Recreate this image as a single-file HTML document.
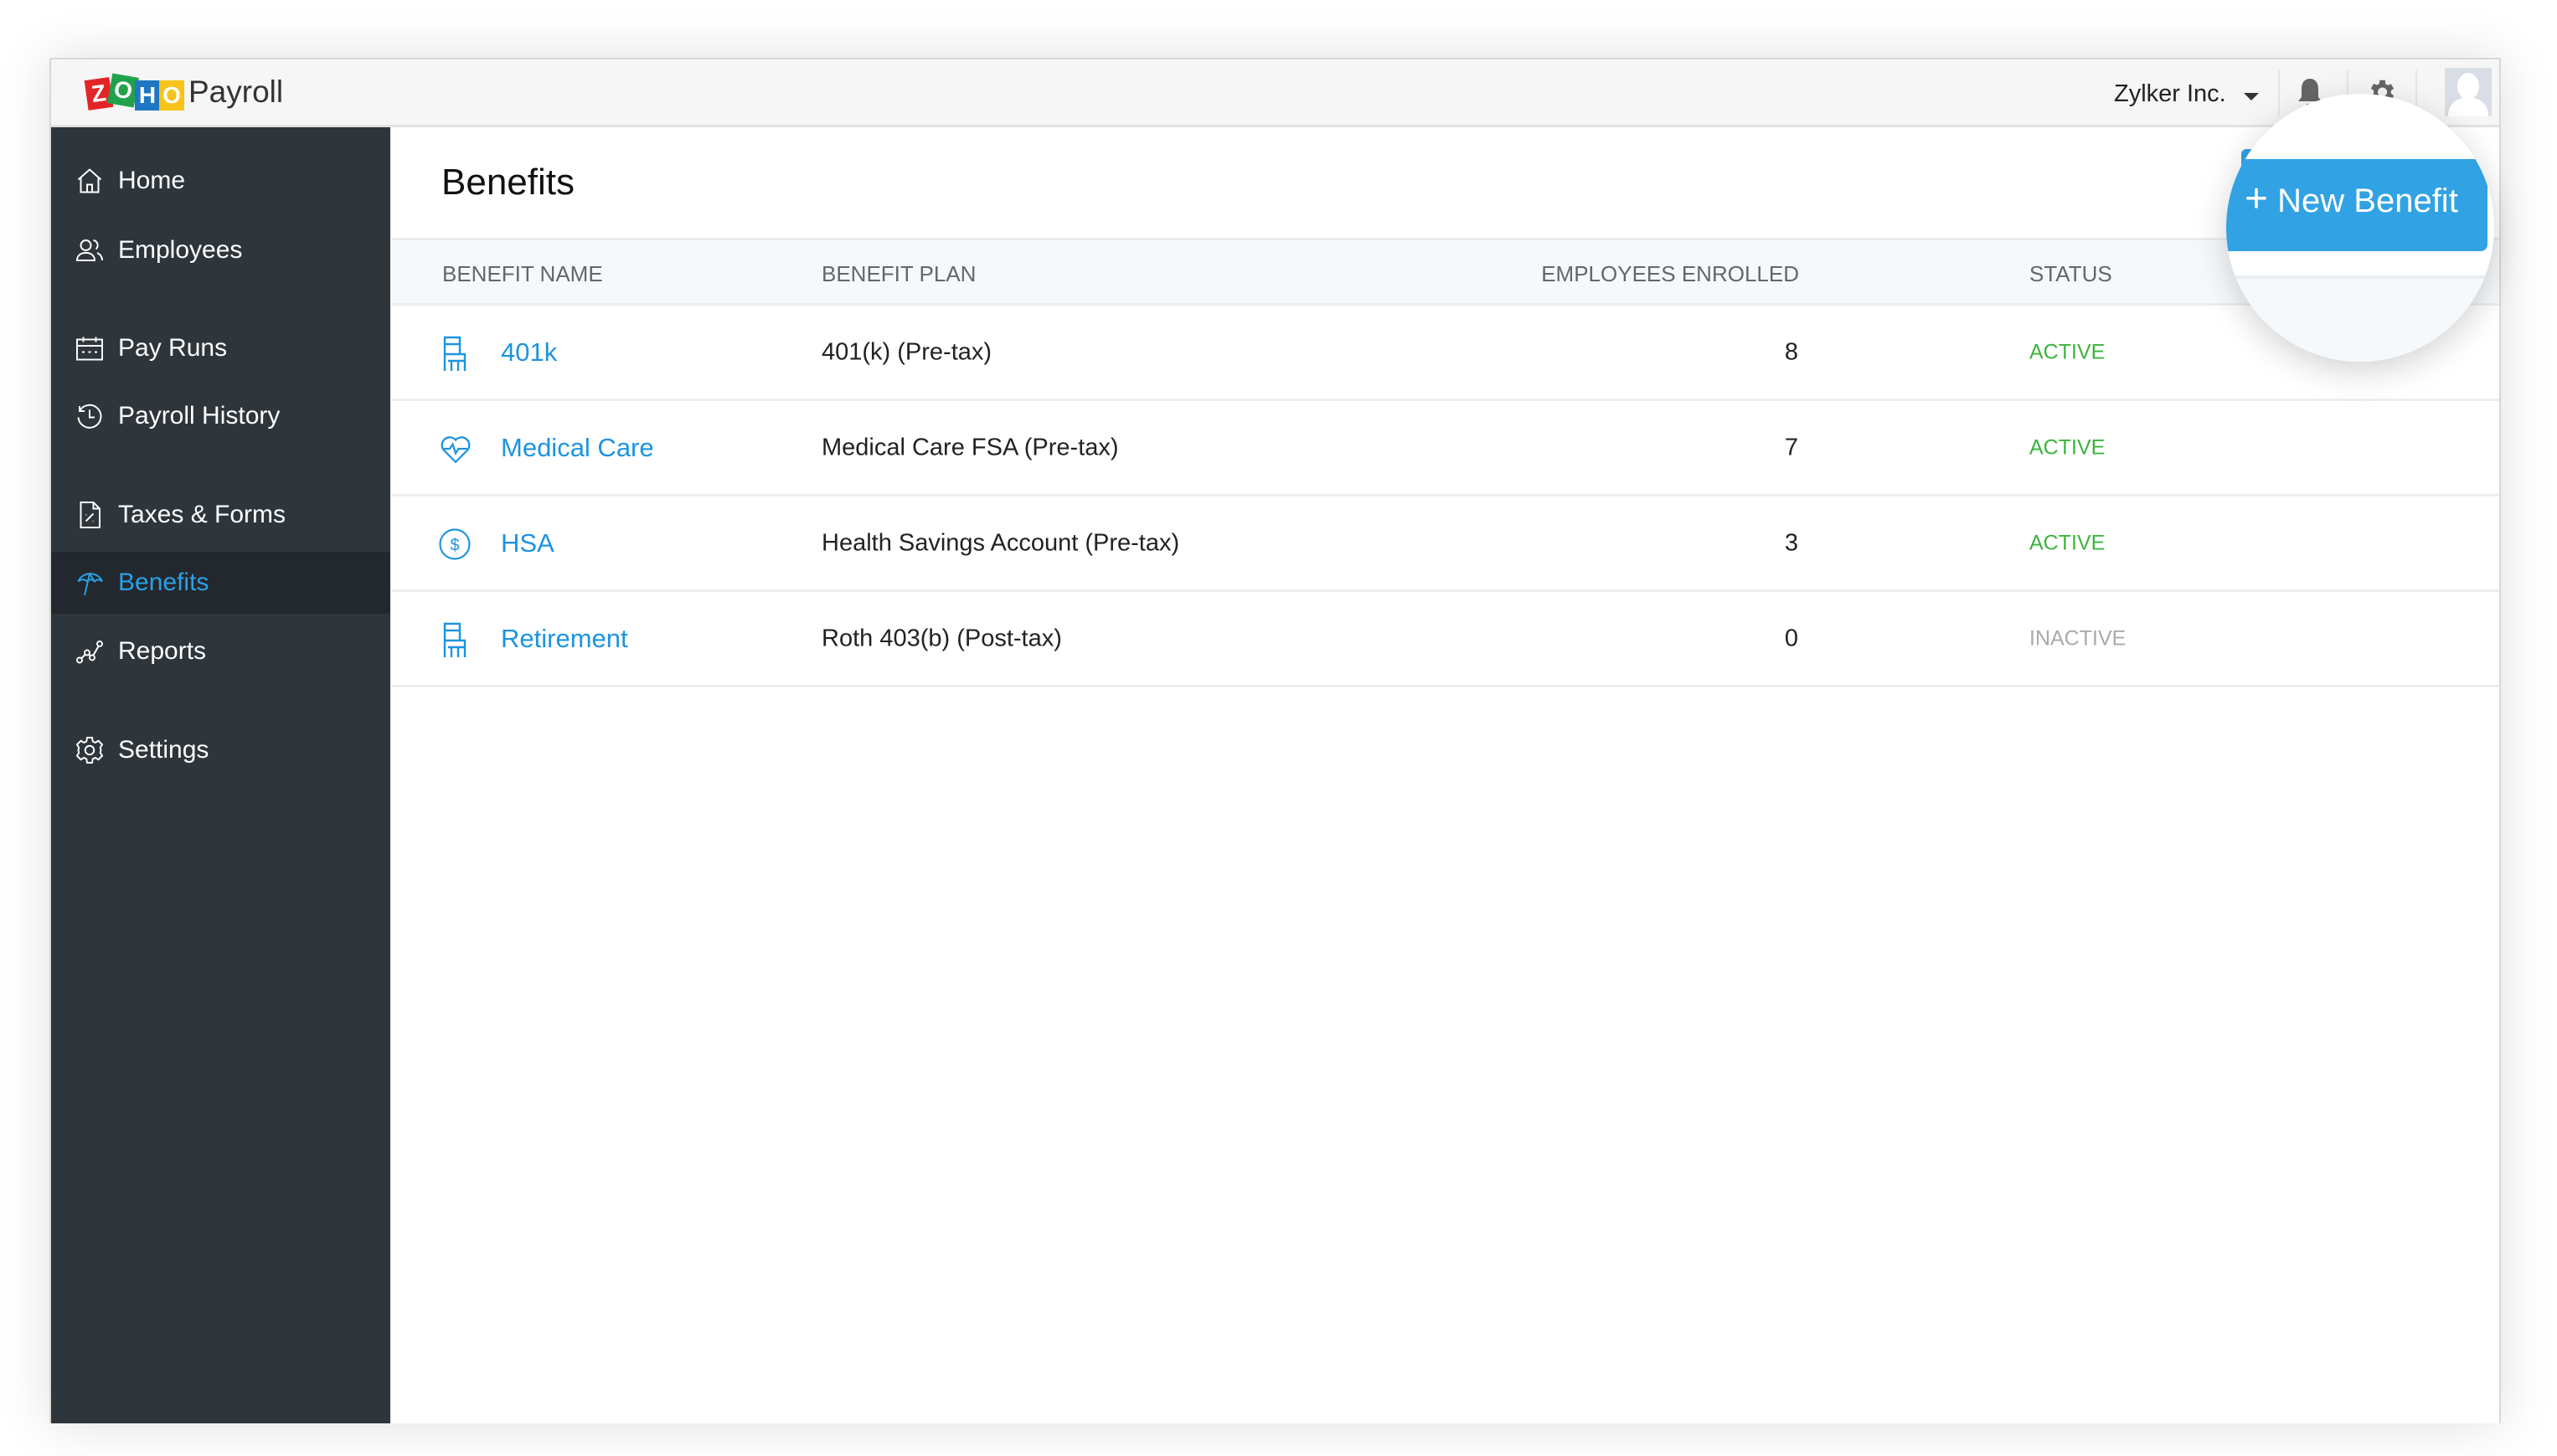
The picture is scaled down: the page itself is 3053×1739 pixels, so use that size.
<!DOCTYPE html>
<html><head><meta charset="utf-8"><style>
*{margin:0;padding:0;box-sizing:border-box}
body{width:3053px;height:1739px;background:#fff;font-family:"Liberation Sans",sans-serif;position:relative;overflow:hidden}
.frame{position:absolute;left:59px;top:69px;width:2927px;height:1631px;background:#fff;box-shadow:0 0 60px rgba(0,0,0,.13);border:2px solid #d8d8d8;border-bottom:none}
.hdr{position:absolute;left:0;top:0;right:0;height:81px;background:#f6f6f6;border-bottom:3px solid #e2e2e2}
.side{position:absolute;left:0;top:81px;width:405px;bottom:0;background:#2e353b}
.nav{position:absolute;left:0;width:405px;height:74px;color:#fff;font-size:30px;display:flex;align-items:center}
.nav svg{position:absolute;left:28px;width:36px;height:36px}
.nav span{position:absolute;left:80px}
.nav.act{background:#22282d;color:#2aa0e6}
.abs{position:absolute}
.th{position:absolute;font-size:26px;color:#666;top:310px}
.row{position:absolute;left:406px;right:0;height:114px;border-bottom:3px solid #eee}
.row .t{position:absolute;top:50%;transform:translateY(-50%);font-size:29px;color:#222;white-space:nowrap}
.row .n{color:#1d94e0;font-size:31px}
.row .s{font-size:25px;color:#3cb43c}
</style></head><body>
<div class="frame">
 <div class="hdr">
  <div class="abs" style="left:42px;top:17px;width:118px;height:48px">
   <div class="abs" style="left:0;top:6px;width:30px;height:36px;background:#e42527;transform:rotate(-8deg);color:#fff;font-weight:bold;font-size:28px;text-align:center;line-height:36px">Z</div>
   <div class="abs" style="left:28px;top:2px;width:32px;height:36px;background:#20a24b;transform:rotate(10deg);color:#fff;font-weight:bold;font-size:28px;text-align:center;line-height:36px">O</div>
   <div class="abs" style="left:58px;top:8px;width:30px;height:36px;background:#1f77c3;color:#fff;font-weight:bold;font-size:28px;text-align:center;line-height:36px">H</div>
   <div class="abs" style="left:87px;top:8px;width:30px;height:36px;background:#f6c31a;color:#fff;font-weight:bold;font-size:28px;text-align:center;line-height:36px">O</div>
  </div>
  <div class="abs" style="left:164px;top:18px;font-size:37px;color:#333">Payroll</div>
  <div class="abs" style="left:2463px;top:25px;font-size:29px;color:#222">Zylker Inc.</div>
  <div class="abs" style="left:2618px;top:40px;border-left:9px solid transparent;border-right:9px solid transparent;border-top:9px solid #333"></div>
  <div class="abs" style="left:2659px;top:12px;width:2px;height:56px;background:#e6e6e6"></div>
  <svg class="abs" style="left:2680px;top:20px" width="34" height="40" viewBox="0 0 34 40"><path d="M17 3c-7 0-10 6-10 12v10l-4 5h28l-4-5V15c0-6-3-12-10-12z M13 33h8a4 4 0 0 1-8 0z" fill="#666"/></svg>
  <div class="abs" style="left:2741px;top:12px;width:2px;height:56px;background:#e6e6e6"></div>
  <svg class="abs" style="left:2763px;top:20px" width="38" height="38" viewBox="0 0 24 24"><path fill="#666" d="M19.4 13a7.5 7.5 0 0 0 0-2l2.1-1.6-2-3.5-2.5 1a7 7 0 0 0-1.700-1L15 3h-4l-.4 2.7a7 7 0 0 0-1.7 1l-2.5-1-2 3.5L6.5 11a7.5 7.5 0 0 0 0 2l-2.1 1.6 2 3.5 2.5-1a7 7 0 0 0 1.7 1L11 21h4l.4-2.7a7 7 0 0 0 1.7-1l2.5 1 2-3.5zM13 15.5a3.5 3.5 0 1 1 0-7 3.5 3.5 0 0 1 0 7z"/></svg>
  <div class="abs" style="left:2823px;top:12px;width:2px;height:56px;background:#e6e6e6"></div>
  <div class="abs" style="left:2858px;top:10px;width:56px;height:58px;background:#d9dde6;overflow:hidden">
   <div class="abs" style="left:15px;top:6px;width:26px;height:32px;border-radius:50%;background:#fff"></div>
   <div class="abs" style="left:4px;top:36px;width:48px;height:30px;border-radius:20px 20px 0 0;background:#fff"></div>
  </div>
 </div>
 <div class="side">
  <div class="nav" style="top:27px"><svg viewBox="0 0 24 24" fill="none" stroke="#fff" stroke-width="1.3"><path d="M3 11l9-8 9 8M5 9v12h14V9M10 21v-6h4v6"/></svg><span>Home</span></div>
  <div class="nav" style="top:110px"><svg viewBox="0 0 24 24" fill="none" stroke="#fff" stroke-width="1.3"><circle cx="9" cy="8" r="4"/><path d="M2 20c0-4 3-6 7-6s7 2 7 6z M15 4a4 4 0 0 1 2 7 M18 14c2 1 4 3 4 6"/></svg><span>Employees</span></div>
  <div class="nav" style="top:227px"><svg viewBox="0 0 24 24" fill="none" stroke="#fff" stroke-width="1.3"><rect x="2" y="5" width="20" height="16"/><path d="M2 10h20M7 3v4M17 3v4M6 15h2M11 15h2M16 15h2"/></svg><span>Pay Runs</span></div>
  <div class="nav" style="top:308px"><svg viewBox="0 0 24 24" fill="none" stroke="#fff" stroke-width="1.3"><path d="M4 8a9 9 0 1 1-1 5M4 4v4h4M12 7v6h4"/></svg><span>Payroll History</span></div>
  <div class="nav" style="top:426px"><svg viewBox="0 0 24 24" fill="none" stroke="#fff" stroke-width="1.3"><path d="M5 2h10l5 5v15H5zM15 2v5h5M9 17l6-6M9 12h.5M14.5 17h.5"/></svg><span>Taxes &amp; Forms</span></div>
  <div class="nav act" style="top:507px"><svg viewBox="0 0 24 24" fill="none" stroke="#2aa0e6" stroke-width="1.3"><path d="M3 11a10 9 0 0 1 19 0c-2-2-4-2-6 0-2-2-4-2-6 0-2-2-5-2-7 0zM12 5l-4 17M12 5l4 6"/></svg><span>Benefits</span></div>
  <div class="nav" style="top:589px"><svg viewBox="0 0 24 24" fill="none" stroke="#fff" stroke-width="1.3"><circle cx="4" cy="19" r="2"/><circle cx="10" cy="13" r="2"/><circle cx="14" cy="17" r="2"/><circle cx="20" cy="6" r="2"/><path d="M5.5 17.5l3-3M11.5 14.5l1 1M15 15l4-7"/></svg><span>Reports</span></div>
  <div class="nav" style="top:707px"><svg viewBox="0 0 24 24" fill="none" stroke="#fff" stroke-width="1.3"><circle cx="12" cy="12" r="3.5"/><path d="M10 2h4l.5 3 2 1 2.5-1.5 3 3L20.5 10l.5 2-.5 2 1.5 2.5-3 3L16.5 18l-2 1-.5 3h-4l-.5-3-2-1-2.5 1.5-3-3L3.5 14 3 12l.5-2L2 7.5l3-3L7.5 6l2-1z"/></svg><span>Settings</span></div>
 </div>
 <div class="abs" style="left:466px;top:122px;font-size:44px;color:#111">Benefits</div>
 <div class="abs" style="left:406px;top:213px;right:0;height:81px;background:#f5f9fc;border-top:3px solid #eaeef1;border-bottom:3px solid #eaeef1"></div>
 <div class="th" style="left:467px;top:241px">BENEFIT NAME</div>
 <div class="th" style="left:920px;top:241px">BENEFIT PLAN</div>
 <div class="th" style="left:1720px;top:241px;width:367px;text-align:right">EMPLOYEES ENROLLED</div>
 <div class="th" style="left:2362px;top:241px">STATUS</div>

 <div class="row" style="top:294px">
  <svg class="abs" style="left:58px;top:36px" width="36" height="44" viewBox="0 0 18 22" fill="none" stroke="#1d94e0" stroke-width="1.2"><path d="M3 1h9v10H3zM3 5h9M3 11l0 10M3 11h12v4H5M7 15v6M11 15v6M15 15v6"/></svg>
  <div class="t n" style="left:131px">401k</div><div class="t" style="left:514px">401(k) (Pre-tax)</div>
  <div class="t" style="left:1528px;width:152px;text-align:right">8</div><div class="t s" style="left:1956px">ACTIVE</div>
 </div>
 <div class="row" style="top:408px">
  <svg class="abs" style="left:56px;top:36px" width="42" height="42" viewBox="0 0 24 24" fill="none" stroke="#1d94e0" stroke-width="1.3"><path d="M12 21L4 13a5 5 0 0 1 8-7 5 5 0 0 1 8 7zM4 12h4l2-3 2 6 2-3h6"/></svg>
  <div class="t n" style="left:131px">Medical Care</div><div class="t" style="left:514px">Medical Care FSA (Pre-tax)</div>
  <div class="t" style="left:1528px;width:152px;text-align:right">7</div><div class="t s" style="left:1956px">ACTIVE</div>
 </div>
 <div class="row" style="top:522px">
  <svg class="abs" style="left:56px;top:37px" width="40" height="40" viewBox="0 0 24 24" fill="none" stroke="#1d94e0" stroke-width="1.3"><circle cx="12" cy="12" r="10.5"/><text x="12" y="16.5" font-size="12" text-anchor="middle" fill="#1d94e0" stroke="none" font-family="Liberation Sans">$</text></svg>
  <div class="t n" style="left:131px">HSA</div><div class="t" style="left:514px">Health Savings Account (Pre-tax)</div>
  <div class="t" style="left:1528px;width:152px;text-align:right">3</div><div class="t s" style="left:1956px">ACTIVE</div>
 </div>
 <div class="row" style="top:636px">
  <svg class="abs" style="left:58px;top:36px" width="36" height="44" viewBox="0 0 18 22" fill="none" stroke="#1d94e0" stroke-width="1.2"><path d="M3 1h9v10H3zM3 5h9M3 11l0 10M3 11h12v4H5M7 15v6M11 15v6M15 15v6"/></svg>
  <div class="t n" style="left:131px">Retirement</div><div class="t" style="left:514px">Roth 403(b) (Post-tax)</div>
  <div class="t" style="left:1528px;width:152px;text-align:right">0</div><div class="t s" style="left:1956px;color:#aaa">INACTIVE</div>
 </div>
</div>
<div class="abs" style="left:2676px;top:178px;width:60px;height:60px;background:#31a2e3;border-radius:6px"></div>
<div class="abs" style="left:2658px;top:112px;width:320px;height:320px;border-radius:50%;background:#fff;overflow:hidden;box-shadow:0 10px 40px rgba(0,0,0,.18)">
 <div class="abs" style="left:0;top:217px;width:100%;height:110px;background:#f5f9fc;border-top:4px solid #eaeef1"></div>
 <div class="abs" style="left:0;top:78px;width:312px;height:110px;background:#31a2e3;border-radius:0 8px 8px 0;color:#fff;font-size:40px;line-height:96px;padding-left:22px;white-space:nowrap"><span style="font-size:48px;font-weight:300">+</span> New Benefit</div>
</div>
</body></html>
